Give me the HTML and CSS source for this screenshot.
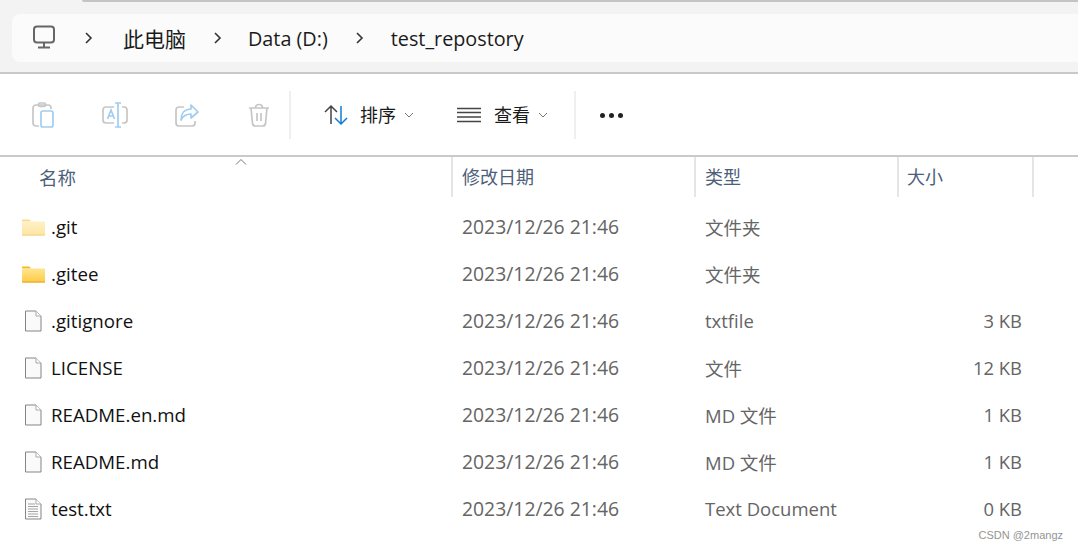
FILE: index.html
```html
<!DOCTYPE html>
<html>
    <head>
        <meta charset="utf-8">
        <link rel="stylesheet" href="styles.css">
    </head>
    <body>
        <svg class="defs" width="0" height="0">
            <symbol id="fileIcon" viewBox="0 0 18 22">
                <path d="M1.5 1h10.5l5 5v15h-15.500z" fill="#fafafa" stroke="#858585"/>
                <path d="M12 1v5h5" fill="#fff" stroke="#a8a8a8"/>
            </symbol>
            <symbol id="textIcon" viewBox="0 0 18 22">
                <path d="M1.500 1h10.500l5 5v15h-15.500z" fill="#fafafa" stroke="#858585"/>
                <path d="M12 1v5h5" fill="#fff" stroke="#a8a8a8"/>
                <path d="M4 6h7M4 8.500h10M4 11h10M4 13.500h10M4 16h10M4 18.500h10" stroke="#a5a5a5" fill="none"/>
            </symbol>
            <symbol id="folderIcon" viewBox="0 0 23 18">
                <path d="M0 2.500a1 1 0 0 1 1-1h6l2.500 2h-9.500z" fill="#f4b91f"/>
                <path d="M0 3.500h23v13a1 1 0 0 1-1 1h-21a1 1 0 0 1-1-1z" fill="url(#folderFill)"/>
                <path d="M0 17h23" stroke="#e6a516"/>
            </symbol>
            <linearGradient id="folderFill" x1="0" y1="0" x2="0" y2="1">
                <stop offset="0" stop-color="#ffe58f"/>
                <stop offset="1" stop-color="#fdcb45"/>
            </linearGradient>
        </svg>

        <div id="container">
            <div class="titleEdge"></div>

            <div class="addressArea">
                <div class="addressBar">
                    <svg class="pcIcon" width="24" height="24" viewBox="0 0 24 24" fill="none" stroke="#666" stroke-width="2">
                        <rect x="2" y="1.500" width="20" height="16" rx="3"/>
                        <path d="M12 18v4M6 22.500h12"/>
                    </svg>
                    <svg class="crumbArrow arrowFirst" width="10" height="14" viewBox="0 0 10 14" fill="none" stroke="#333" stroke-width="1.600"><path d="M2 2l5 5-5 5"/></svg>
                    <span class="crumb crumbPc">此电脑</span>
                    <svg class="crumbArrow arrowSecond" width="10" height="14" viewBox="0 0 10 14" fill="none" stroke="#333" stroke-width="1.600"><path d="M2 2l5 5-5 5"/></svg>
                    <span class="crumb crumbDrive">Data (D:)</span>
                    <svg class="crumbArrow arrowThird" width="10" height="14" viewBox="0 0 10 14" fill="none" stroke="#333" stroke-width="1.600"><path d="M2 2l5 5-5 5"/></svg>
                    <span class="crumb crumbFolder">test_repostory</span>
                </div>
            </div>

            <div class="toolbar">
                <svg class="toolIcon iconPaste" width="24" height="26" viewBox="0 0 24 26" fill="none" stroke-width="1.700">
                    <path d="M8 24h-3a3 3 0 0 1-3-3v-15a3 3 0 0 1 3-3h12a3 3 0 0 1 3 3v1" stroke="#c6c6c6"/>
                    <rect x="7.500" y="1" width="7" height="3.500" rx="1.500" stroke="#c6c6c6"/>
                    <rect x="10" y="9" width="12" height="16" rx="2" stroke="#9fcdf2"/>
                </svg>
                <svg class="toolIcon iconRename" width="26" height="26" viewBox="0 0 26 26" fill="none" stroke-width="1.700">
                    <path d="M12 5h-8a3 3 0 0 0-3 3v10a3 3 0 0 0 3 3h8M20 5h2a3 3 0 0 1 3 3v10a3 3 0 0 1-3 3h-2" stroke="#c6c6c6"/>
                    <path d="M13 1h6M13 25h6M16 1v24M5.500 17l3.500-9 3.500 9M7 14h4" stroke="#9fcdf2"/>
                </svg>
                <svg class="toolIcon iconShare" width="24" height="24" viewBox="0 0 24 24" fill="none" stroke-width="1.700">
                    <path d="M9 4h-5a3 3 0 0 0-3 3v13a3 3 0 0 0 3 3h13a3 3 0 0 0 3-3v-2" stroke="#c6c6c6"/>
                    <path d="M16 2l7 7-7 6v-4c-5 0-8 2-10 6 0-6 3-11 10-11z" stroke="#9fcdf2" stroke-linejoin="round"/>
                </svg>
                <svg class="toolIcon iconDelete" width="22" height="24" viewBox="0 0 22 24" fill="none" stroke="#c6c6c6" stroke-width="1.700">
                    <path d="M1 5h20M7.500 4.500c0-4 7-4 7 0M3 5l1.500 15.500a3 3 0 0 0 3 2.500h7a3 3 0 0 0 3-2.500l1.500-15.500M9 10v8M13 10v8"/>
                </svg>
                <div class="toolSep sepFirst"></div>
                <svg class="toolIcon iconSort" width="25" height="22" viewBox="0 0 25 22" fill="none" stroke-width="1.500">
                    <path d="M7 20v-18M1 8l6-6 6 6" stroke="#444"/>
                    <path d="M17 2v18M11 14l6 6 6-6" stroke="#0f7dd6"/>
                </svg>
                <span class="toolText textSort">排序</span>
                <svg class="chevron chevronSort" width="10" height="6" viewBox="0 0 10 6" fill="none" stroke="#777"><path d="M1 1l4 4 4-4"/></svg>
                <svg class="toolIcon iconView" width="24" height="16" viewBox="0 0 24 16" fill="none" stroke="#444" stroke-width="1.300">
                    <path d="M0 1.500h24M0 5.500h24M0 10h24M0 14.500h24"/>
                </svg>
                <span class="toolText textView">查看</span>
                <svg class="chevron chevronView" width="10" height="6" viewBox="0 0 10 6" fill="none" stroke="#777"><path d="M1 1l4 4 4-4"/></svg>
                <div class="toolSep sepSecond"></div>
                <div class="moreDots"><span></span><span></span><span></span></div>
            </div>

            <div class="listHeader">
                <svg class="sortCaret" width="12" height="6" viewBox="0 0 12 6" fill="none" stroke="#777"><path d="M1 5.500l5-5 5 5"/></svg>
                <div class="headCell headName">名称</div>
                <div class="headCell headDate">修改日期</div>
                <div class="headCell headType">类型</div>
                <div class="headCell headSize">大小</div>
                <div class="headCell headEnd"></div>
            </div>

            <div class="fileList">
                <div class="fileRow">
                    <div class="nameCell"><svg class="folderSvg folderHidden" width="23" height="18"><use href="#folderIcon"/></svg><span>.git</span></div>
                    <div class="dateCell">2023/12/26 21:46</div>
                    <div class="typeCell">文件夹</div>
                    <div class="sizeCell"></div>
                </div>
                <div class="fileRow">
                    <div class="nameCell"><svg class="folderSvg" width="23" height="18"><use href="#folderIcon"/></svg><span>.gitee</span></div>
                    <div class="dateCell">2023/12/26 21:46</div>
                    <div class="typeCell">文件夹</div>
                    <div class="sizeCell"></div>
                </div>
                <div class="fileRow">
                    <div class="nameCell"><svg class="fileSvg" width="18" height="22"><use href="#fileIcon"/></svg><span>.gitignore</span></div>
                    <div class="dateCell">2023/12/26 21:46</div>
                    <div class="typeCell">txtfile</div>
                    <div class="sizeCell">3 KB</div>
                </div>
                <div class="fileRow">
                    <div class="nameCell"><svg class="fileSvg" width="18" height="22"><use href="#fileIcon"/></svg><span>LICENSE</span></div>
                    <div class="dateCell">2023/12/26 21:46</div>
                    <div class="typeCell">文件</div>
                    <div class="sizeCell">12 KB</div>
                </div>
                <div class="fileRow">
                    <div class="nameCell"><svg class="fileSvg" width="18" height="22"><use href="#fileIcon"/></svg><span>README.en.md</span></div>
                    <div class="dateCell">2023/12/26 21:46</div>
                    <div class="typeCell">MD 文件</div>
                    <div class="sizeCell">1 KB</div>
                </div>
                <div class="fileRow">
                    <div class="nameCell"><svg class="fileSvg" width="18" height="22"><use href="#fileIcon"/></svg><span>README.md</span></div>
                    <div class="dateCell">2023/12/26 21:46</div>
                    <div class="typeCell">MD 文件</div>
                    <div class="sizeCell">1 KB</div>
                </div>
                <div class="fileRow">
                    <div class="nameCell"><svg class="fileSvg" width="18" height="22"><use href="#textIcon"/></svg><span>test.txt</span></div>
                    <div class="dateCell">2023/12/26 21:46</div>
                    <div class="typeCell">Text Document</div>
                    <div class="sizeCell">0 KB</div>
                </div>
            </div>
            <div class="watermark">CSDN @2mangz</div>
        </div>
    </body>
</html>
```

FILE: styles.css
```css
html, body {
    margin: 0;
    padding: 0;
    background: #fff;
}
#container {
    position: relative;
    width: 1078px;
    height: 551px;
    overflow: hidden;
    font-family: "Open Sans", "Noto Sans CJK SC", sans-serif;
    font-size: 19px;
    color: #111;
    background: #fff;
}
.defs {
    position: absolute;
}
svg {
    display: block;
    flex: none;
}
.titleEdge {
    position: absolute;
    top: 0;
    left: 82px;
    right: 0;
    height: 2px;
    background: #c4c4c4;
    border-bottom-left-radius: 3px;
}
.addressArea {
    height: 48px;
    padding: 14px 0 10px 12px;
    background: #f3f3f3;
    border-bottom: 2px solid #c9c9c9;
}
.addressBar {
    display: flex;
    align-items: center;
    height: 48px;
    padding-left: 20px;
    background: #fbfbfb;
    border-radius: 8px 0 0 8px;
}
.crumb {
    font-size: 19.8px;
    white-space: nowrap;
    color: #1a1a1a;
}
.pcIcon {
    margin-top: -3px;
}
.arrowFirst {
    margin-left: 28px;
}
.crumbPc {
    margin-left: 29px;
    font-size: 21px;
}
.arrowSecond {
    margin-left: 27px;
}
.crumbDrive {
    margin-left: 25px;
}
.arrowThird {
    margin-left: 27px;
}
.crumbFolder {
    margin-left: 26px;
}
.toolbar {
    display: flex;
    align-items: center;
    height: 81px;
    padding-left: 31px;
    border-bottom: 2px solid #c9c9c9;
}
.iconRename {
    margin-left: 47px;
}
.iconShare {
    margin-left: 47px;
}
.iconDelete {
    margin-left: 49px;
}
.toolSep {
    width: 2px;
    height: 48px;
    background: #efefef;
}
.sepFirst {
    margin-left: 19px;
}
.iconSort {
    margin-left: 33px;
}
.toolText {
    font-size: 18px;
    color: #1a1a1a;
    margin-top: -2px;
}
.textSort {
    margin-left: 11px;
}
.chevron {
    margin-left: 8px;
}
.iconView {
    margin-left: 43px;
}
.textView {
    margin-left: 13px;
}
.sepSecond {
    margin-left: 26px;
}
.moreDots {
    display: flex;
    gap: 4px;
    margin-left: 24px;
    margin-top: 1px;
}
.moreDots span {
    width: 5px;
    height: 5px;
    border-radius: 50%;
    background: #222;
}
.listHeader {
    position: relative;
    display: grid;
    grid-template-columns: 453px 243px 203px 135px 44px;
    height: 40px;
}
.sortCaret {
    position: absolute;
    top: 2px;
    left: 235px;
}
.headCell {
    height: 40px;
    padding-left: 8px;
    font-size: 18px;
    line-height: 41px;
    color: #4c6079;
    border-right: 2px solid #e5e5e5;
    box-sizing: border-box;
}
.headName {
    padding-left: 39px;
    font-size: 18.500px;
}
.headDate {
    padding-left: 9px;
}
.headType {
    padding-left: 9px;
}
.headEnd {
    border-right: none;
}
.fileList {
    padding-top: 6px;
}
.fileRow {
    display: grid;
    grid-template-columns: 452px 243px 203px 135px;
    align-items: center;
    height: 47px;
}
.nameCell {
    display: flex;
    align-items: center;
    padding-left: 22px;
    font-size: 18.700px;
    white-space: nowrap;
}
.folderSvg {
    margin-right: 6px;
}
.folderHidden {
    opacity: 0.5;
}
.fileSvg {
    margin-left: 2px;
    margin-right: 9px;
}
.dateCell, .typeCell, .sizeCell {
    padding-left: 10px;
    color: #656565;
    white-space: nowrap;
}
.dateCell {
    font-size: 19.350px;
}
.typeCell {
    font-size: 18.500px;
}
.sizeCell {
    padding-left: 0;
    padding-right: 11px;
    font-size: 18.400px;
    text-align: right;
}
.watermark {
    position: absolute;
    right: 15px;
    bottom: 10px;
    font-family: "Liberation Sans", sans-serif;
    font-size: 11px;
    color: #949494;
}
```
